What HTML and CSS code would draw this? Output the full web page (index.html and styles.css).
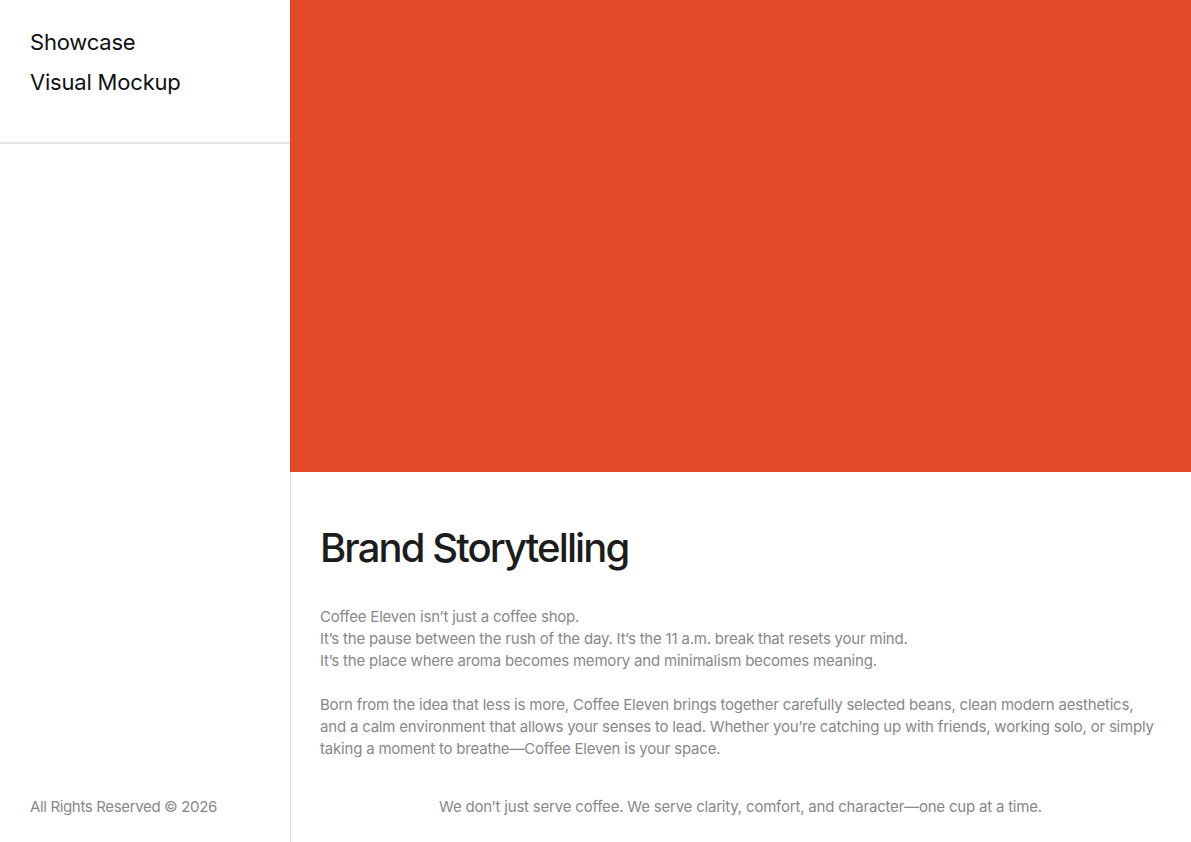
FILE: index.html
```html
<!DOCTYPE html>
<html lang="en">
<head>
    <meta charset="UTF-8">
    <title>Coffee Eleven - Showcase</title>
    <link rel="stylesheet" href="styles.css">
</head>
<body>
    <div class="page">
        <aside class="sidebar">
            <div class="sidebar-top">
                <div class="nav-item">Showcase</div>
                <div class="nav-item">Visual Mockup</div>
            </div>
            <div class="sidebar-footer">All Rights Reserved © 2026</div>
        </aside>

        <main class="main">
            <div class="hero"></div>

            <section class="story">
                <h1>Brand Storytelling</h1>
                <p>
                    Coffee Eleven isn’t just a coffee shop.<br>
                    It’s the pause between the rush of the day. It’s the 11 a.m. break that resets your mind.<br>
                    It’s the place where aroma becomes memory and minimalism becomes meaning.
                </p>
                <p>
                    Born from the idea that less is more, Coffee Eleven brings together carefully selected beans, clean modern aesthetics,<br>
                    and a calm environment that allows your senses to lead. Whether you’re catching up with friends, working solo, or simply<br>
                    taking a moment to breathe—Coffee Eleven is your space.
                </p>
                <div class="tagline">We don’t just serve coffee. We serve clarity, comfort, and character—one cup at a time.</div>
            </section>
        </main>
    </div>
</body>
</html>
```

FILE: styles.css
```css
body {
    margin: 0;
    font-family: 'Inter', 'Liberation Sans', sans-serif;
    background: #fff;
    color: #111;
}

.page {
    display: flex;
    height: 842px;
    overflow: hidden;
}

.sidebar {
    width: 290px;
    flex-shrink: 0;
    display: flex;
    flex-direction: column;
    justify-content: space-between;
}

.sidebar-top {
    height: 144px;
    border-bottom: 2px solid #e6e6e6;
    padding: 22px 30px 0;
    box-sizing: border-box;
}

.nav-item {
    font-size: 22px;
    line-height: 40px;
    letter-spacing: -0.2px;
    color: #111;
}

.sidebar-footer {
    padding: 0 30px 26px;
    font-size: 15px;
    letter-spacing: -0.35px;
    color: #888;
}

.main {
    flex: 1;
    display: flex;
    flex-direction: column;
}

.hero {
    height: 472px;
    flex-shrink: 0;
    background: #e34827;
}

.story {
    flex: 1;
    border-left: 1px solid #dcdcdc;
    padding: 0 20px 26px 29px;
    display: flex;
    flex-direction: column;
}

.story h1 {
    margin: 52px 0 34px;
    font-size: 40px;
    font-weight: 500;
    letter-spacing: -1.9px;
    line-height: 48px;
    color: #1c1c1c;
}

.story p {
    margin: 0 0 22px;
    font-size: 15px;
    line-height: 22px;
    letter-spacing: -0.2px;
    color: #888;
}

.tagline {
    margin-top: auto;
    margin-right: 10px;
    text-align: center;
    font-size: 15px;
    letter-spacing: -0.2px;
    color: #888;
}
```
